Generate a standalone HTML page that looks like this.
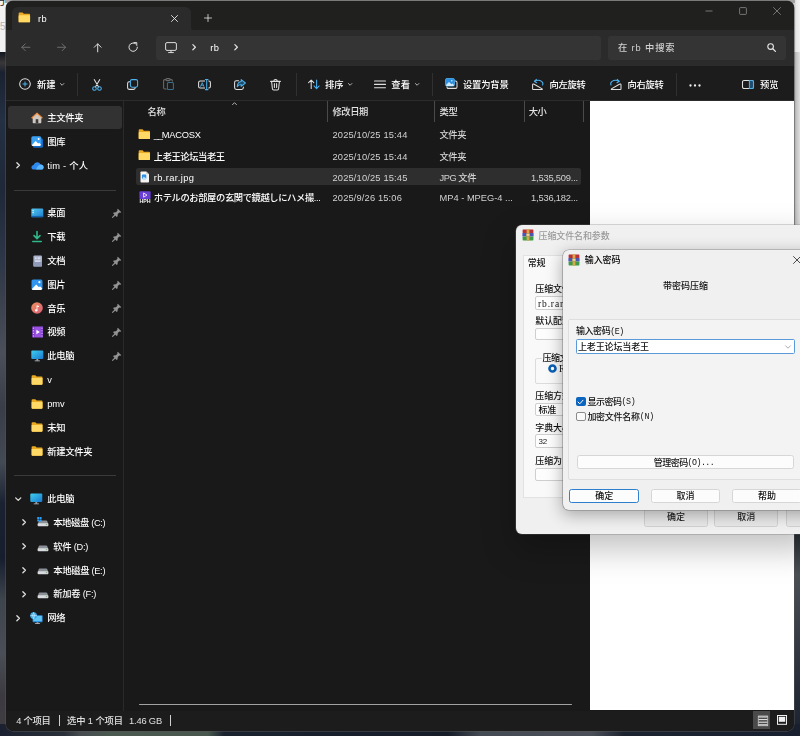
<!DOCTYPE html>
<html lang="zh-CN">
<head>
<meta charset="utf-8">
<title>rb</title>
<style>
*{box-sizing:border-box;margin:0;padding:0}
html,body{width:800px;height:736px;overflow:hidden}
body{position:relative;background:#2d333b;font-family:"Liberation Sans","Noto Sans CJK SC",sans-serif;font-size:9px;color:#fff;line-height:1}
.abs{position:absolute}
.t{position:absolute;white-space:nowrap;line-height:12px;height:12px;font-size:9px}
#wi,#dl{will-change:transform}
svg{position:absolute;overflow:visible}
#win{left:6px;top:1.2px;width:788px;height:729.5px;background:#191919;border-radius:7px;overflow:hidden;box-shadow:0 0 0 0.5px #555}
#wi{left:-6px;top:-1.2px;width:800px;height:736px;font-weight:500}
#wi .t{font-size:9.3px;margin-top:0.6px}
#dl{font-weight:500}
</style>
</head>
<body>

<div class="abs" style="left:0.00px;top:0.00px;width:800.00px;height:52.00px;background:#f2f2f2;"></div>
<div class="abs" style="left:0.00px;top:52.00px;width:10.00px;height:684.00px;background:linear-gradient(180deg,#10151f 0%,#3a3838 1.6%,#1a2230 3%,#243044 10%,#1e2838 20%,#2c3648 30%,#3a404c 36%,#4a4f5a 44%,#383d48 52%,#444a54 60%,#1a2232 66%,#161e2e 74%,#3e444c 80%,#4a4e56 88%,#3c3a40 94%,#403c42 100%);"></div>
<div class="abs" style="left:790.00px;top:0.00px;width:10.00px;height:534.00px;background:linear-gradient(90deg,#a0a0a0 0%,#a0a0a0 40%,#c4c4c4 65%,#e0e0e0 100%);"></div>
<div class="abs" style="left:790.00px;top:0.00px;width:10.00px;height:52.00px;background:linear-gradient(90deg,#c8c8c8 0%,#c8c8c8 40%,#e8e8e8 65%,#f2f2f2 100%);"></div>
<div class="abs" style="left:790.00px;top:534.00px;width:10.00px;height:202.00px;background:linear-gradient(180deg,#2a3038 0%,#4a4f56 20%,#3a4048 45%,#2a313c 70%,#1a2230 100%);"></div>
<div class="abs" style="left:0.00px;top:724.00px;width:800.00px;height:12.00px;background:linear-gradient(90deg,#1a2030 0%,#2a3038 8%,#464b50 10%,#4a5a50 14%,#48584e 26%,#1a2230 28%,#161c28 56%,#444a52 60%,#4a4f58 74%,#1c2330 78%,#182030 100%);"></div>
<div class="abs" style="left:5.00px;top:0.00px;width:790.00px;height:3.00px;background:#a2a2a2;"></div>
<div class="t" style='left:-5.00px;top:-4.70px;color:#222;font-size:11.00px;'>方</div>
<div class="t" style='left:-5.50px;top:20.80px;color:#b4b4b4;font-size:10.00px;font-family:"Liberation Sans",sans-serif;'>25</div>
<div class="abs" id="win"><div class="abs" id="wi">
<div class="abs" style="left:0.00px;top:0.00px;width:800.00px;height:30.00px;background:#20211f;"></div>
<div class="abs" style="left:11.80px;top:7.40px;width:179.20px;height:24.00px;background:#2b2b2b;border-radius:6px 6px 0 0;"></div>
<svg style="left:191.00px;top:27.00px;" width="3.00" height="3.00" viewBox="0 0 3 3"><path d="M0 3 V0 Q0 3 3 3 Z" fill="#2b2b2b"/></svg>
<div class="abs" style="left:0.00px;top:30.00px;width:800.00px;height:35.50px;background:#2b2b2b;"></div>
<div class="abs" style="left:0.00px;top:65.50px;width:800.00px;height:35.00px;background:#1c1c1c;"></div>
<div class="abs" style="left:0.00px;top:100.00px;width:800.00px;height:0.80px;background:#2c2c2c;"></div>
<svg style="left:18.00px;top:11.80px;" width="12.60" height="10.80" viewBox="0 0 12 10"><path d="M0.6 1.2 Q0.6 0.3 1.5 0.3 H4.3 L5.6 1.6 H10.6 Q11.5 1.6 11.5 2.5 V8.8 Q11.5 9.7 10.6 9.7 H1.5 Q0.6 9.7 0.6 8.8 Z" fill="#e9a923"/><path d="M0.6 3.6 Q0.6 2.9 1.4 2.9 H10.7 Q11.5 2.9 11.5 3.6 V8.8 Q11.5 9.7 10.6 9.7 H1.5 Q0.6 9.7 0.6 8.8 Z" fill="#ffd965"/></svg>
<div class="t" style='letter-spacing:0.359px;left:38.00px;top:12.80px;'>rb</div>
<svg style="left:171.00px;top:14.50px;" width="7.00" height="7.00" viewBox="0 0 7 7"><path d="M0.5 0.5 L6.5 6.5 M6.5 0.5 L0.5 6.5" stroke="#e8e8e8" stroke-width="0.9" stroke-linecap="round"/></svg>
<svg style="left:203.50px;top:14.00px;" width="8.00" height="8.00" viewBox="0 0 8 8"><path d="M4 0.5 V7.5 M0.5 4 H7.5" stroke="#e8e8e8" stroke-width="0.8" stroke-linecap="round"/></svg>
<svg style="left:704.80px;top:10.00px;" width="8.00" height="2.00" viewBox="0 0 8 2"><path d="M0.5 1 H7.5" stroke="#8c8c8c" stroke-width="0.8"/></svg>
<svg style="left:738.50px;top:7.00px;" width="8.00" height="8.00" viewBox="0 0 8 8"><rect x="0.6" y="0.6" width="6.8" height="6.8" rx="0.8" fill="none" stroke="#8c8c8c" stroke-width="0.8"/></svg>
<svg style="left:772.80px;top:7.00px;" width="8.00" height="8.00" viewBox="0 0 8 8"><path d="M0.5 0.5 L7.5 7.5 M7.5 0.5 L0.5 7.5" stroke="#8c8c8c" stroke-width="0.8" stroke-linecap="round"/></svg>
<svg style="left:21.30px;top:42.80px;" width="9.40" height="9.40" viewBox="0 0 11 11"><path d="M10.4 5 H1 M5 1 L1 5 L5 9" fill="none" stroke="#6e6e6e" stroke-width="1.15" stroke-linecap="round" stroke-linejoin="round"/></svg>
<svg style="left:57.30px;top:42.80px;" width="9.40" height="9.40" viewBox="0 0 11 11"><path d="M0.6 5 H10 M6 1 L10 5 L6 9" fill="none" stroke="#6e6e6e" stroke-width="1.15" stroke-linecap="round" stroke-linejoin="round"/></svg>
<svg style="left:92.60px;top:42.80px;" width="9.40" height="9.40" viewBox="0 0 11 11"><path d="M5.5 10.4 V1 M1.5 5 L5.5 1 L9.5 5" fill="none" stroke="#e0e0e0" stroke-width="1.15" stroke-linecap="round" stroke-linejoin="round"/></svg>
<svg style="left:128.00px;top:42.30px;" width="10.40" height="10.40" viewBox="0 0 10.4 10.4"><path d="M9.4 5.2 A4.2 4.2 0 1 1 7.6 1.7" fill="none" stroke="#e0e0e0" stroke-width="1" stroke-linecap="round"/><path d="M6 0.6 H8.8 V3.4" fill="none" stroke="#e0e0e0" stroke-width="1" stroke-linecap="round" stroke-linejoin="round"/></svg>
<div class="abs" style="left:156.00px;top:36.00px;width:445.00px;height:24.00px;background:#343434;border-radius:3px;"></div>
<svg style="left:165.30px;top:41.80px;" width="12.00" height="11.20" viewBox="0 0 12 11.2"><rect x="0.6" y="0.6" width="10.8" height="7.8" rx="1.4" fill="none" stroke="#dcdcdc" stroke-width="1"/><path d="M3.6 10.6 H8.4 M6 8.4 V10.6" stroke="#dcdcdc" stroke-width="1" stroke-linecap="round"/></svg>
<svg style="left:191.68px;top:44.37px;" width="4.25" height="6.46" viewBox="0 0 5 7.6"><path d="M1 0.8 L4 3.8 L1 6.8" fill="none" stroke="#e0e0e0" stroke-width="1.4" stroke-linecap="round" stroke-linejoin="round"/></svg>
<div class="t" style='letter-spacing:0.559px;left:210.20px;top:41.90px;'>rb</div>
<svg style="left:234.07px;top:44.37px;" width="4.25" height="6.46" viewBox="0 0 5 7.6"><path d="M1 0.8 L4 3.8 L1 6.8" fill="none" stroke="#e0e0e0" stroke-width="1.4" stroke-linecap="round" stroke-linejoin="round"/></svg>
<div class="abs" style="left:607.50px;top:36.00px;width:178.50px;height:24.00px;background:#343434;border-radius:3px;"></div>
<div class="t" style='letter-spacing:0.859px;left:618.00px;top:41.90px;color:#d0d0d0;'>在 rb 中搜索</div>
<svg style="left:767.20px;top:43.30px;" width="9.00" height="9.00" viewBox="0 0 9 9"><circle cx="3.6" cy="3.6" r="2.8" fill="none" stroke="#e6e6e6" stroke-width="1.1"/><path d="M5.8 5.8 L8.4 8.4" stroke="#e6e6e6" stroke-width="1.3" stroke-linecap="round"/></svg>
<svg style="left:19.00px;top:78.30px;" width="12.00" height="12.00" viewBox="0 0 12 12"><circle cx="6" cy="6" r="5.3" fill="none" stroke="#e4e4e4" stroke-width="1.05"/><path d="M6 3.9 V8.1 M3.9 6 H8.1" stroke="#4cb2f0" stroke-width="1" stroke-linecap="round"/></svg>
<div class="t" style='letter-spacing:-0.055px;left:37.00px;top:78.60px;'>新建</div>
<svg style="left:59.87px;top:83.20px;" width="4.26" height="2.80" viewBox="0 0 7.6 5"><path d="M0.8 1 L3.8 4 L6.8 1" fill="none" stroke="#c8c8c8" stroke-width="1.6" stroke-linecap="round" stroke-linejoin="round"/></svg>
<div class="abs" style="left:77.00px;top:72.50px;width:1.00px;height:23.50px;background:#303030;"></div>
<svg style="left:91.80px;top:78.50px;" width="10.00" height="11.60" viewBox="0 0 10 11.6"><path d="M2.2 0.6 L6.6 8 M7.8 0.6 L3.4 8" stroke="#e0e0e0" stroke-width="1.05" stroke-linecap="round"/><circle cx="2.5" cy="9.5" r="1.8" fill="none" stroke="#4cb2f0" stroke-width="1.05"/><circle cx="7.5" cy="9.5" r="1.8" fill="none" stroke="#4cb2f0" stroke-width="1.05"/></svg>
<svg style="left:127.00px;top:78.80px;" width="11.20" height="11.00" viewBox="0 0 11.2 11"><rect x="3.4" y="0.6" width="7.2" height="7.6" rx="1.6" fill="none" stroke="#4cb2f0" stroke-width="1.05"/><path d="M3 2.8 H2.2 Q0.6 2.8 0.6 4.4 V8.8 Q0.6 10.4 2.2 10.4 H6.6 Q8.2 10.4 8.2 8.8 V8.4" fill="none" stroke="#e0e0e0" stroke-width="1.05"/></svg>
<svg style="left:162.90px;top:78.30px;" width="11.00" height="12.00" viewBox="0 0 11 12"><path d="M3 1.6 H1.8 Q0.6 1.6 0.6 2.8 V9.8 Q0.6 11 1.8 11 H3.6" fill="none" stroke="#6a6a6a" stroke-width="1.05"/><path d="M7 1.6 H8.2 Q9.4 1.6 9.4 2.8 V3.6" fill="none" stroke="#6a6a6a" stroke-width="1.05"/><rect x="3" y="0.6" width="4" height="2" rx="0.8" fill="none" stroke="#6a6a6a" stroke-width="1.05"/><rect x="4.4" y="4.4" width="6" height="7" rx="1" fill="none" stroke="#3a6f8c" stroke-width="1.05"/></svg>
<svg style="left:197.50px;top:78.80px;" width="13.00" height="11.00" viewBox="0 0 13 11"><path d="M7 2 H2.2 Q0.6 2 0.6 3.6 V7.4 Q0.6 9 2.2 9 H7 M10.4 2 H10.8 Q12.4 2 12.4 3.6 V7.4 Q12.4 9 10.8 9 H10.4" fill="none" stroke="#e0e0e0" stroke-width="1.05"/><path d="M8.7 0.4 V10.6 M7.4 0.4 H10 M7.4 10.6 H10" stroke="#4cb2f0" stroke-width="1.05" stroke-linecap="round"/><path d="M2.6 7.4 L4.2 3.6 L5.8 7.4 M3.2 6.2 H5.2" fill="none" stroke="#4cb2f0" stroke-width="0.8" stroke-linecap="round" stroke-linejoin="round"/></svg>
<svg style="left:234.00px;top:78.80px;" width="12.00" height="11.00" viewBox="0 0 12 11"><path d="M4.6 1.8 H2.4 Q0.6 1.8 0.6 3.6 V8.6 Q0.6 10.4 2.4 10.4 H7.6 Q9.4 10.4 9.4 8.6 V8" fill="none" stroke="#e0e0e0" stroke-width="1.05" stroke-linecap="round"/><path d="M7.2 0.6 L11.4 4 L7.2 7.4 V5.4 Q4.4 5.4 3.2 7.8 Q3.4 3 7.2 2.6 Z" fill="#1f4a68" stroke="#4cb2f0" stroke-width="1.05" stroke-linejoin="round"/></svg>
<svg style="left:270.30px;top:78.50px;" width="11.00" height="11.60" viewBox="0 0 11 11.6"><path d="M0.6 2.4 H10.4 M3.8 2.2 Q3.8 0.6 5.5 0.6 Q7.2 0.6 7.2 2.2" fill="none" stroke="#e0e0e0" stroke-width="1.05" stroke-linecap="round"/><path d="M1.6 2.6 L2.4 9.8 Q2.5 11 3.7 11 H7.3 Q8.5 11 8.6 9.8 L9.4 2.6" fill="none" stroke="#e0e0e0" stroke-width="1.05"/><path d="M4.4 4.6 V8.6 M6.6 4.6 V8.6" stroke="#e0e0e0" stroke-width="1.05" stroke-linecap="round"/></svg>
<div class="abs" style="left:295.50px;top:72.50px;width:1.00px;height:23.50px;background:#303030;"></div>
<svg style="left:307.70px;top:79.00px;" width="11.80" height="10.60" viewBox="0 0 11.8 10.6"><path d="M3.2 9.6 V1 M0.6 3.6 L3.2 1 L5.8 3.6" fill="none" stroke="#e0e0e0" stroke-width="1.05" stroke-linecap="round" stroke-linejoin="round"/><path d="M8.6 1 V9.6 M6 7 L8.6 9.6 L11.2 7" fill="none" stroke="#4cb2f0" stroke-width="1.05" stroke-linecap="round" stroke-linejoin="round"/></svg>
<div class="t" style='letter-spacing:0.045px;left:325.00px;top:78.60px;'>排序</div>
<svg style="left:347.87px;top:83.20px;" width="4.26" height="2.80" viewBox="0 0 7.6 5"><path d="M0.8 1 L3.8 4 L6.8 1" fill="none" stroke="#c8c8c8" stroke-width="1.6" stroke-linecap="round" stroke-linejoin="round"/></svg>
<svg style="left:373.50px;top:80.10px;" width="12.00" height="8.80" viewBox="0 0 12 8.8"><path d="M0.5 1 H11.5 M0.5 4.4 H11.5 M0.5 7.8 H11.5" stroke="#e0e0e0" stroke-width="1.05" stroke-linecap="round"/></svg>
<div class="t" style='letter-spacing:0.045px;left:391.30px;top:78.60px;'>查看</div>
<svg style="left:414.57px;top:83.20px;" width="4.26" height="2.80" viewBox="0 0 7.6 5"><path d="M0.8 1 L3.8 4 L6.8 1" fill="none" stroke="#c8c8c8" stroke-width="1.6" stroke-linecap="round" stroke-linejoin="round"/></svg>
<div class="abs" style="left:431.50px;top:72.50px;width:1.00px;height:23.50px;background:#303030;"></div>
<svg style="left:444.60px;top:78.20px;" width="12.60" height="11.00" viewBox="0 0 12.6 11"><path d="M9.8 3 H10.6 Q12 3 12 4.4 V9 Q12 10.4 10.6 10.4 H3.4 Q2 10.4 2 9 V8.4" fill="none" stroke="#e0e0e0" stroke-width="1.05"/><rect x="0.5" y="0.5" width="9" height="7.6" rx="1.4" fill="#2d8fe0" stroke="#4cb2f0" stroke-width="0.8"/><path d="M0.9 7 L4 4 L6.4 6.2 L7.4 5.4 L9.1 7 Q9 8.1 8 8.1 H2 Q1 8.1 0.9 7 Z" fill="#cfeaff"/><circle cx="6.8" cy="2.8" r="0.8" fill="#cfeaff"/></svg>
<div class="t" style='letter-spacing:-0.200px;left:463.00px;top:78.60px;'>设置为背景</div>
<svg style="left:532.20px;top:79.10px;" width="11.60" height="11.20" viewBox="0 0 11.6 11.2"><path d="M2.6 2.2 Q6.6 0.4 9.6 2.4 Q11.6 4 10.6 6" fill="none" stroke="#4cb2f0" stroke-width="1.05" stroke-linecap="round"/><path d="M4.4 0.4 L2.4 2.3 L4.6 3.8" fill="none" stroke="#4cb2f0" stroke-width="1.05" stroke-linecap="round" stroke-linejoin="round"/><path d="M1.2 10.6 H9.8 Q10.6 10.6 10.2 9.9 L2.2 5.2 Q0.6 4.4 0.6 6 V10 Q0.6 10.6 1.2 10.6 Z" fill="none" stroke="#e0e0e0" stroke-width="1.05" stroke-linejoin="round"/></svg>
<div class="t" style='letter-spacing:-0.301px;left:549.60px;top:78.60px;'>向左旋转</div>
<svg style="left:609.70px;top:79.10px;" width="11.60" height="11.20" viewBox="0 0 11.6 11.2"><path d="M9 2.2 Q5 0.4 2 2.4 Q0 4 1 6" fill="none" stroke="#4cb2f0" stroke-width="1.05" stroke-linecap="round"/><path d="M7.2 0.4 L9.2 2.3 L7 3.8" fill="none" stroke="#4cb2f0" stroke-width="1.05" stroke-linecap="round" stroke-linejoin="round"/><path d="M10.4 10.6 H1.8 Q1 10.6 1.4 9.9 L9.4 5.2 Q11 4.4 11 6 V10 Q11 10.6 10.4 10.6 Z" fill="none" stroke="#e0e0e0" stroke-width="1.05" stroke-linejoin="round"/></svg>
<div class="t" style='letter-spacing:-0.301px;left:627.50px;top:78.60px;'>向右旋转</div>
<div class="abs" style="left:676.00px;top:72.50px;width:1.00px;height:23.50px;background:#303030;"></div>
<svg style="left:689.00px;top:83.50px;" width="12.00" height="3.00" viewBox="0 0 12 3"><circle cx="1.5" cy="1.5" r="1.15" fill="#f0f0f0"/><circle cx="6" cy="1.5" r="1.15" fill="#f0f0f0"/><circle cx="10.5" cy="1.5" r="1.15" fill="#f0f0f0"/></svg>
<svg style="left:742.00px;top:80.00px;" width="12.00" height="9.00" viewBox="0 0 12 9"><rect x="0.5" y="0.5" width="11" height="8" rx="1.6" fill="none" stroke="#e0e0e0" stroke-width="1.05"/><path d="M7.4 0.5 H9.9 Q11.5 0.5 11.5 2.1 V6.9 Q11.5 8.5 9.9 8.5 H7.4 Z" fill="#1f4e70" stroke="#4cb2f0" stroke-width="1.05"/></svg>
<div class="t" style='letter-spacing:-0.155px;left:760.00px;top:78.60px;'>预览</div>
<div class="abs" style="left:123.00px;top:100.50px;width:1.00px;height:610.00px;background:#2a2a2a;"></div>
<div class="abs" style="left:8.00px;top:105.80px;width:114.00px;height:23.60px;background:#323232;border-radius:3px;"></div>
<svg style="left:31.20px;top:111.80px;" width="12.00" height="12.00" viewBox="0 0 12 12"><path d="M6 0.8 L11.4 5.6 V6.4 H0.6 V5.6 Z" fill="#f08a3c"/><path d="M1.7 5.2 L6 1.6 L10.3 5.2 V10.6 Q10.3 11.2 9.7 11.2 H2.3 Q1.7 11.2 1.7 10.6 Z" fill="#cfc8c0"/><path d="M6 0.5 L11.6 5.4 L10.8 6.3 L6 2.1 L1.2 6.3 L0.4 5.4 Z" fill="#ef8a3e"/><rect x="4.7" y="7.2" width="2.6" height="4" fill="#3a3a3a"/></svg><div class="t" style='letter-spacing:-0.301px;left:47.20px;top:111.60px;'>主文件夹</div>
<svg style="left:31.20px;top:135.60px;" width="12.00" height="12.00" viewBox="0 0 12 12"><rect x="2" y="2.2" width="10" height="9.6" rx="1.6" fill="#1568c4"/><rect x="0.3" y="0.3" width="10" height="9.6" rx="1.6" fill="#3ba0f2"/><path d="M0.8 9.2 L4.6 5 L7.2 7.6 L8.2 6.7 L9.9 8.6 Q9.9 9.9 8.7 9.9 H1.9 Q0.9 9.9 0.8 9.2 Z" fill="#fff"/><circle cx="7.6" cy="3" r="1" fill="#fff"/></svg><div class="t" style='letter-spacing:-0.305px;left:47.20px;top:135.40px;'>图库</div>
<svg style="left:30.70px;top:160.65px;" width="13.00" height="9.50" viewBox="0 0 13 9.5"><path d="M3.2 8.6 Q0.4 8.6 0.4 6.2 Q0.4 4.2 2.6 3.9 Q3.4 1.2 6.2 1.2 Q8.6 1.2 9.5 3.4 Q12.6 3.6 12.6 6.2 Q12.6 8.6 10 8.6 Z" fill="#2f8af0"/><path d="M5 8.6 Q6 4.6 9.5 3.4 Q12.6 3.6 12.6 6.2 Q12.6 8.6 10 8.6 Z" fill="#5db6fb"/></svg><div class="t" style='letter-spacing:0.219px;left:47.20px;top:159.20px;'>tim - 个人</div><svg style="left:15.88px;top:162.47px;" width="4.25" height="6.46" viewBox="0 0 5 7.6"><path d="M1 0.8 L4 3.8 L1 6.8" fill="none" stroke="#e0e0e0" stroke-width="1.5" stroke-linecap="round" stroke-linejoin="round"/></svg>
<div class="abs" style="left:13.80px;top:189.50px;width:102.00px;height:0.90px;background:#3a3a3a;"></div>
<svg style="left:30.90px;top:208.10px;" width="12.60" height="9.80" viewBox="0 0 12.6 9.8"><defs><linearGradient id="gdk" x1="0" y1="0" x2="1" y2="1"><stop offset="0" stop-color="#55c7ee"/><stop offset="1" stop-color="#1c7fd0"/></linearGradient></defs><rect x="0.3" y="0.6" width="12" height="8.6" rx="1.2" fill="url(#gdk)"/><rect x="1.5" y="2" width="1.2" height="1.2" fill="#e8f8ff"/><rect x="1.5" y="4" width="1.2" height="1.2" fill="#e8f8ff"/><rect x="0.3" y="7.9" width="12" height="1.3" fill="#1563ad"/></svg><div class="t" style='letter-spacing:-0.305px;left:47.20px;top:206.80px;'>桌面</div><svg style="left:111.60px;top:208.20px;" width="10.00" height="10.00" viewBox="0 0 9 9"><path d="M5.2 0.6 L8.4 3.8 L7.4 4.3 L6.6 4.1 L5.2 5.5 L5 7.4 L4.2 8 L1 4.8 L1.6 4 L3.5 3.8 L4.9 2.4 L4.7 1.6 Z" fill="#939393"/><path d="M2.7 6.3 L0.5 8.5" stroke="#939393" stroke-width="1" stroke-linecap="round"/></svg>
<svg style="left:32.20px;top:231.12px;" width="10.00" height="11.40" viewBox="0 0 10 11.4"><path d="M5 0.5 V7.2 M2 4.6 L5 7.6 L8 4.6" fill="none" stroke="#2fb888" stroke-width="1.6" stroke-linecap="round" stroke-linejoin="round"/><path d="M0.8 10.5 H9.2" stroke="#2fb888" stroke-width="1.6" stroke-linecap="round"/></svg><div class="t" style='letter-spacing:-0.305px;left:47.20px;top:230.62px;'>下载</div><svg style="left:111.60px;top:232.02px;" width="10.00" height="10.00" viewBox="0 0 9 9"><path d="M5.2 0.6 L8.4 3.8 L7.4 4.3 L6.6 4.1 L5.2 5.5 L5 7.4 L4.2 8 L1 4.8 L1.6 4 L3.5 3.8 L4.9 2.4 L4.7 1.6 Z" fill="#939393"/><path d="M2.7 6.3 L0.5 8.5" stroke="#939393" stroke-width="1" stroke-linecap="round"/></svg>
<svg style="left:32.50px;top:254.64px;" width="9.40" height="12.00" viewBox="0 0 9.4 12"><rect x="0.4" y="0.4" width="8.6" height="11.2" rx="1.2" fill="#a9b4cc"/><rect x="0.4" y="6.5" width="8.6" height="5.1" rx="1.2" fill="#8f9bb8"/><rect x="2" y="2.6" width="1.6" height="1" fill="#f4f6fa"/><rect x="4.6" y="2.6" width="2.8" height="1" fill="#f4f6fa"/><rect x="2" y="5.6" width="5.4" height="1" fill="#f4f6fa"/></svg><div class="t" style='letter-spacing:-0.305px;left:47.20px;top:254.44px;'>文档</div><svg style="left:111.60px;top:255.84px;" width="10.00" height="10.00" viewBox="0 0 9 9"><path d="M5.2 0.6 L8.4 3.8 L7.4 4.3 L6.6 4.1 L5.2 5.5 L5 7.4 L4.2 8 L1 4.8 L1.6 4 L3.5 3.8 L4.9 2.4 L4.7 1.6 Z" fill="#939393"/><path d="M2.7 6.3 L0.5 8.5" stroke="#939393" stroke-width="1" stroke-linecap="round"/></svg>
<svg style="left:31.20px;top:278.76px;" width="12.00" height="11.40" viewBox="0 0 12 11.4"><rect x="0.5" y="0.5" width="11" height="10.4" rx="1.6" fill="#2f95ee"/><path d="M0.9 10 L5.2 5.4 L8 8.2 L9 7.3 L11.2 9.6 Q11 10.9 9.9 10.9 H2.1 Q1 10.9 0.9 10 Z" fill="#fff"/><circle cx="8.4" cy="3.2" r="1.1" fill="#fff"/></svg><div class="t" style='letter-spacing:-0.305px;left:47.20px;top:278.26px;'>图片</div><svg style="left:111.60px;top:279.66px;" width="10.00" height="10.00" viewBox="0 0 9 9"><path d="M5.2 0.6 L8.4 3.8 L7.4 4.3 L6.6 4.1 L5.2 5.5 L5 7.4 L4.2 8 L1 4.8 L1.6 4 L3.5 3.8 L4.9 2.4 L4.7 1.6 Z" fill="#939393"/><path d="M2.7 6.3 L0.5 8.5" stroke="#939393" stroke-width="1" stroke-linecap="round"/></svg>
<svg style="left:31.20px;top:302.28px;" width="12.00" height="12.00" viewBox="0 0 12 12"><defs><linearGradient id="gmu" x1="0" y1="0" x2="1" y2="1"><stop offset="0" stop-color="#f0925a"/><stop offset="1" stop-color="#d85c7c"/></linearGradient></defs><circle cx="6" cy="6" r="5.8" fill="url(#gmu)"/><path d="M5.6 8.4 V3.2 L8 3.9 V5.1 L6.4 4.7 V8.4" fill="#fff"/><ellipse cx="5.2" cy="8.4" rx="1.3" ry="1.1" fill="#fff"/></svg><div class="t" style='letter-spacing:-0.305px;left:47.20px;top:302.08px;'>音乐</div><svg style="left:111.60px;top:303.48px;" width="10.00" height="10.00" viewBox="0 0 9 9"><path d="M5.2 0.6 L8.4 3.8 L7.4 4.3 L6.6 4.1 L5.2 5.5 L5 7.4 L4.2 8 L1 4.8 L1.6 4 L3.5 3.8 L4.9 2.4 L4.7 1.6 Z" fill="#939393"/><path d="M2.7 6.3 L0.5 8.5" stroke="#939393" stroke-width="1" stroke-linecap="round"/></svg>
<svg style="left:31.50px;top:326.10px;" width="11.40" height="12.00" viewBox="0 0 11.4 12"><rect x="0.4" y="0.4" width="10.6" height="11.2" rx="1.4" fill="#9a52e0"/><rect x="0.4" y="0.4" width="2" height="11.2" fill="#7a36c4"/><rect x="9" y="0.4" width="2" height="11.2" fill="#7a36c4"/><rect x="0.9" y="1.6" width="1" height="1.2" fill="#e6d4fa"/><rect x="0.9" y="4.2" width="1" height="1.2" fill="#e6d4fa"/><rect x="0.9" y="6.8" width="1" height="1.2" fill="#e6d4fa"/><rect x="0.9" y="9.4" width="1" height="1.2" fill="#e6d4fa"/><rect x="9.5" y="1.6" width="1" height="1.2" fill="#e6d4fa"/><rect x="9.5" y="4.2" width="1" height="1.2" fill="#e6d4fa"/><rect x="9.5" y="6.8" width="1" height="1.2" fill="#e6d4fa"/><rect x="9.5" y="9.4" width="1" height="1.2" fill="#e6d4fa"/><path d="M4.4 3.8 L7.8 6 L4.4 8.2 Z" fill="#fff"/></svg><div class="t" style='letter-spacing:-0.305px;left:47.20px;top:325.90px;'>视频</div><svg style="left:111.60px;top:327.30px;" width="10.00" height="10.00" viewBox="0 0 9 9"><path d="M5.2 0.6 L8.4 3.8 L7.4 4.3 L6.6 4.1 L5.2 5.5 L5 7.4 L4.2 8 L1 4.8 L1.6 4 L3.5 3.8 L4.9 2.4 L4.7 1.6 Z" fill="#939393"/><path d="M2.7 6.3 L0.5 8.5" stroke="#939393" stroke-width="1" stroke-linecap="round"/></svg>
<svg style="left:30.90px;top:350.12px;" width="12.60" height="11.60" viewBox="0 0 12.6 11.6"><defs><linearGradient id="gpc" x1="0" y1="0" x2="1" y2="1"><stop offset="0" stop-color="#3fd0f0"/><stop offset="1" stop-color="#1a78d0"/></linearGradient></defs><rect x="0.3" y="0.4" width="12" height="8.6" rx="1.1" fill="url(#gpc)"/><rect x="5.4" y="9" width="1.8" height="1.6" fill="#9aa4ae"/><rect x="3.6" y="10.4" width="5.4" height="0.9" rx="0.4" fill="#c4ccd4"/></svg><div class="t" style='letter-spacing:-0.302px;left:47.20px;top:349.72px;'>此电脑</div><svg style="left:111.60px;top:351.12px;" width="10.00" height="10.00" viewBox="0 0 9 9"><path d="M5.2 0.6 L8.4 3.8 L7.4 4.3 L6.6 4.1 L5.2 5.5 L5 7.4 L4.2 8 L1 4.8 L1.6 4 L3.5 3.8 L4.9 2.4 L4.7 1.6 Z" fill="#939393"/><path d="M2.7 6.3 L0.5 8.5" stroke="#939393" stroke-width="1" stroke-linecap="round"/></svg>
<svg style="left:31.20px;top:374.74px;" width="12.00" height="10.00" viewBox="0 0 12 10"><path d="M0.6 1.2 Q0.6 0.3 1.5 0.3 H4.3 L5.6 1.6 H10.6 Q11.5 1.6 11.5 2.5 V8.8 Q11.5 9.7 10.6 9.7 H1.5 Q0.6 9.7 0.6 8.8 Z" fill="#e9a923"/><path d="M0.6 3.6 Q0.6 2.9 1.4 2.9 H10.7 Q11.5 2.9 11.5 3.6 V8.8 Q11.5 9.7 10.6 9.7 H1.5 Q0.6 9.7 0.6 8.8 Z" fill="#ffd965"/></svg><div class="t" style='letter-spacing:-0.156px;left:47.20px;top:373.54px;'>v</div>
<svg style="left:31.20px;top:398.56px;" width="12.00" height="10.00" viewBox="0 0 12 10"><path d="M0.6 1.2 Q0.6 0.3 1.5 0.3 H4.3 L5.6 1.6 H10.6 Q11.5 1.6 11.5 2.5 V8.8 Q11.5 9.7 10.6 9.7 H1.5 Q0.6 9.7 0.6 8.8 Z" fill="#e9a923"/><path d="M0.6 3.6 Q0.6 2.9 1.4 2.9 H10.7 Q11.5 2.9 11.5 3.6 V8.8 Q11.5 9.7 10.6 9.7 H1.5 Q0.6 9.7 0.6 8.8 Z" fill="#ffd965"/></svg><div class="t" style='letter-spacing:-0.026px;left:47.20px;top:397.36px;'>pmv</div>
<svg style="left:31.20px;top:422.38px;" width="12.00" height="10.00" viewBox="0 0 12 10"><path d="M0.6 1.2 Q0.6 0.3 1.5 0.3 H4.3 L5.6 1.6 H10.6 Q11.5 1.6 11.5 2.5 V8.8 Q11.5 9.7 10.6 9.7 H1.5 Q0.6 9.7 0.6 8.8 Z" fill="#e9a923"/><path d="M0.6 3.6 Q0.6 2.9 1.4 2.9 H10.7 Q11.5 2.9 11.5 3.6 V8.8 Q11.5 9.7 10.6 9.7 H1.5 Q0.6 9.7 0.6 8.8 Z" fill="#ffd965"/></svg><div class="t" style='letter-spacing:-0.305px;left:47.20px;top:421.18px;'>未知</div>
<svg style="left:31.20px;top:446.20px;" width="12.00" height="10.00" viewBox="0 0 12 10"><path d="M0.6 1.2 Q0.6 0.3 1.5 0.3 H4.3 L5.6 1.6 H10.6 Q11.5 1.6 11.5 2.5 V8.8 Q11.5 9.7 10.6 9.7 H1.5 Q0.6 9.7 0.6 8.8 Z" fill="#e9a923"/><path d="M0.6 3.6 Q0.6 2.9 1.4 2.9 H10.7 Q11.5 2.9 11.5 3.6 V8.8 Q11.5 9.7 10.6 9.7 H1.5 Q0.6 9.7 0.6 8.8 Z" fill="#ffd965"/></svg><div class="t" style='letter-spacing:-0.300px;left:47.20px;top:445.00px;'>新建文件夹</div>
<div class="abs" style="left:13.80px;top:475.00px;width:102.00px;height:0.90px;background:#3a3a3a;"></div>
<svg style="left:30.30px;top:492.70px;" width="12.60" height="11.60" viewBox="0 0 12.6 11.6"><defs><linearGradient id="gpc" x1="0" y1="0" x2="1" y2="1"><stop offset="0" stop-color="#3fd0f0"/><stop offset="1" stop-color="#1a78d0"/></linearGradient></defs><rect x="0.3" y="0.4" width="12" height="8.6" rx="1.1" fill="url(#gpc)"/><rect x="5.4" y="9" width="1.8" height="1.6" fill="#9aa4ae"/><rect x="3.6" y="10.4" width="5.4" height="0.9" rx="0.4" fill="#c4ccd4"/></svg><div class="t" style='letter-spacing:-0.302px;left:47.20px;top:492.30px;'>此电脑</div><svg style="left:14.77px;top:496.68px;" width="6.46" height="4.25" viewBox="0 0 7.6 5"><path d="M0.8 1 L3.8 4 L6.8 1" fill="none" stroke="#e0e0e0" stroke-width="1.5" stroke-linecap="round" stroke-linejoin="round"/></svg>
<svg style="left:36.60px;top:516.80px;" width="12.00" height="9.60" viewBox="0 0 12 9.6"><path d="M1.6 4.6 Q1.8 3.6 2.8 3.6 H9.2 Q10.2 3.6 10.4 4.6 L11.2 7 H0.8 Z" fill="#8b9096"/><rect x="0.6" y="6.2" width="10.8" height="3" rx="0.9" fill="#d8dadd"/><rect x="8.8" y="7.3" width="1.4" height="0.8" fill="#6a9a6a"/><rect x="0.2" y="0" width="2" height="2" fill="#2a9df4"/><rect x="2.6" y="0" width="2" height="2" fill="#2a9df4"/><rect x="0.2" y="2.4" width="2" height="2" fill="#2a9df4"/><rect x="2.6" y="2.4" width="2" height="2" fill="#2a9df4"/></svg><div class="t" style='letter-spacing:-0.363px;left:53.20px;top:516.20px;'>本地磁盘 (C:)</div><svg style="left:21.88px;top:519.47px;" width="4.25" height="6.46" viewBox="0 0 5 7.6"><path d="M1 0.8 L4 3.8 L1 6.8" fill="none" stroke="#e0e0e0" stroke-width="1.5" stroke-linecap="round" stroke-linejoin="round"/></svg>
<svg style="left:36.60px;top:541.50px;" width="12.00" height="9.60" viewBox="0 0 12 9.6"><path d="M1.6 4.6 Q1.8 3.6 2.8 3.6 H9.2 Q10.2 3.6 10.4 4.6 L11.2 7 H0.8 Z" fill="#8b9096"/><rect x="0.6" y="6.2" width="10.8" height="3" rx="0.9" fill="#d8dadd"/><rect x="8.8" y="7.3" width="1.4" height="0.8" fill="#6a9a6a"/></svg><div class="t" style='letter-spacing:-0.239px;left:53.20px;top:540.10px;'>软件 (D:)</div><svg style="left:21.88px;top:543.37px;" width="4.25" height="6.46" viewBox="0 0 5 7.6"><path d="M1 0.8 L4 3.8 L1 6.8" fill="none" stroke="#e0e0e0" stroke-width="1.5" stroke-linecap="round" stroke-linejoin="round"/></svg>
<svg style="left:36.60px;top:565.40px;" width="12.00" height="9.60" viewBox="0 0 12 9.6"><path d="M1.6 4.6 Q1.8 3.6 2.8 3.6 H9.2 Q10.2 3.6 10.4 4.6 L11.2 7 H0.8 Z" fill="#8b9096"/><rect x="0.6" y="6.2" width="10.8" height="3" rx="0.9" fill="#d8dadd"/><rect x="8.8" y="7.3" width="1.4" height="0.8" fill="#6a9a6a"/></svg><div class="t" style='letter-spacing:-0.306px;left:53.20px;top:564.00px;'>本地磁盘 (E:)</div><svg style="left:21.88px;top:567.27px;" width="4.25" height="6.46" viewBox="0 0 5 7.6"><path d="M1 0.8 L4 3.8 L1 6.8" fill="none" stroke="#e0e0e0" stroke-width="1.5" stroke-linecap="round" stroke-linejoin="round"/></svg>
<svg style="left:36.60px;top:589.30px;" width="12.00" height="9.60" viewBox="0 0 12 9.6"><path d="M1.6 4.6 Q1.8 3.6 2.8 3.6 H9.2 Q10.2 3.6 10.4 4.6 L11.2 7 H0.8 Z" fill="#8b9096"/><rect x="0.6" y="6.2" width="10.8" height="3" rx="0.9" fill="#d8dadd"/><rect x="8.8" y="7.3" width="1.4" height="0.8" fill="#6a9a6a"/></svg><div class="t" style='letter-spacing:-0.242px;left:53.20px;top:587.90px;'>新加卷 (F:)</div><svg style="left:21.88px;top:591.17px;" width="4.25" height="6.46" viewBox="0 0 5 7.6"><path d="M1 0.8 L4 3.8 L1 6.8" fill="none" stroke="#e0e0e0" stroke-width="1.5" stroke-linecap="round" stroke-linejoin="round"/></svg>
<svg style="left:30.10px;top:611.90px;" width="13.00" height="12.20" viewBox="0 0 13 12.2"><rect x="2.6" y="3.2" width="10" height="7" rx="0.9" fill="#2e8fdc"/><rect x="3.4" y="4" width="8.4" height="5" fill="#5ec4f4"/><rect x="6.6" y="10.2" width="1.8" height="1.2" fill="#9aa4ae"/><rect x="4.8" y="11.2" width="5.4" height="0.8" rx="0.4" fill="#c4ccd4"/><circle cx="3.6" cy="3.6" r="3.4" fill="#3aa8ea"/><path d="M0.4 3.6 H6.8 M3.6 0.4 Q1.6 3.6 3.6 6.8 M3.6 0.4 Q5.6 3.6 3.6 6.8" fill="none" stroke="#d8f2ff" stroke-width="0.6"/></svg><div class="t" style='letter-spacing:-0.305px;left:47.20px;top:611.80px;'>网络</div><svg style="left:15.88px;top:615.07px;" width="4.25" height="6.46" viewBox="0 0 5 7.6"><path d="M1 0.8 L4 3.8 L1 6.8" fill="none" stroke="#e0e0e0" stroke-width="1.5" stroke-linecap="round" stroke-linejoin="round"/></svg>
<div class="t" style='letter-spacing:-0.305px;left:147.50px;top:105.90px;color:#e4e4e4;'>名称</div>
<svg style="left:232.49px;top:101.55px;" width="5.02" height="3.30" viewBox="0 0 7.6 5"><path d="M0.8 4 L3.8 1 L6.8 4" fill="none" stroke="#b4b4b4" stroke-width="1.5" stroke-linecap="round" stroke-linejoin="round"/></svg>
<div class="abs" style="left:327.30px;top:101.00px;width:0.90px;height:20.50px;background:#4a4a4a;"></div>
<div class="t" style='letter-spacing:-0.426px;left:332.50px;top:105.90px;color:#e4e4e4;'>修改日期</div>
<div class="abs" style="left:434.30px;top:101.00px;width:0.90px;height:20.50px;background:#4a4a4a;"></div>
<div class="t" style='letter-spacing:-0.305px;left:439.50px;top:105.90px;color:#e4e4e4;'>类型</div>
<div class="abs" style="left:524.00px;top:101.00px;width:0.90px;height:20.50px;background:#4a4a4a;"></div>
<div class="t" style='letter-spacing:-0.555px;left:528.80px;top:105.90px;color:#e4e4e4;'>大小</div>
<div class="abs" style="left:583.00px;top:101.00px;width:0.90px;height:20.50px;background:#4a4a4a;"></div>
<div class="abs" style="left:135.80px;top:168.20px;width:444.80px;height:17.00px;background:#2e2e2e;border-radius:2.5px;"></div>
<svg style="left:138.20px;top:129.00px;" width="12.60" height="10.40" viewBox="0 0 12 10"><path d="M0.6 1.2 Q0.6 0.3 1.5 0.3 H4.3 L5.6 1.6 H10.6 Q11.5 1.6 11.5 2.5 V8.8 Q11.5 9.7 10.6 9.7 H1.5 Q0.6 9.7 0.6 8.8 Z" fill="#e9a923"/><path d="M0.6 3.6 Q0.6 2.9 1.4 2.9 H10.7 Q11.5 2.9 11.5 3.6 V8.8 Q11.5 9.7 10.6 9.7 H1.5 Q0.6 9.7 0.6 8.8 Z" fill="#ffd965"/></svg>
<div class="t" style='letter-spacing:-0.194px;left:153.80px;top:128.80px;'><span style='letter-spacing:-1.2px'>__</span>MACOSX</div>
<div class="t" style='letter-spacing:0.163px;left:332.50px;top:128.80px;color:#d2d2d2;'>2025/10/25 15:44</div>
<div class="t" style='letter-spacing:-0.469px;left:439.50px;top:128.80px;color:#d2d2d2;'>文件夹</div>
<svg style="left:138.20px;top:150.20px;" width="12.60" height="10.40" viewBox="0 0 12 10"><path d="M0.6 1.2 Q0.6 0.3 1.5 0.3 H4.3 L5.6 1.6 H10.6 Q11.5 1.6 11.5 2.5 V8.8 Q11.5 9.7 10.6 9.7 H1.5 Q0.6 9.7 0.6 8.8 Z" fill="#e9a923"/><path d="M0.6 3.6 Q0.6 2.9 1.4 2.9 H10.7 Q11.5 2.9 11.5 3.6 V8.8 Q11.5 9.7 10.6 9.7 H1.5 Q0.6 9.7 0.6 8.8 Z" fill="#ffd965"/></svg>
<div class="t" style='letter-spacing:-0.449px;left:153.80px;top:150.00px;'>上老王论坛当老王</div>
<div class="t" style='letter-spacing:0.163px;left:332.50px;top:150.00px;color:#d2d2d2;'>2025/10/25 15:44</div>
<div class="t" style='letter-spacing:-0.469px;left:439.50px;top:150.00px;color:#d2d2d2;'>文件夹</div>
<svg style="left:139.75px;top:170.50px;" width="9.50" height="12.00" viewBox="0 0 9.5 12"><path d="M0.5 1.2 Q0.5 0.4 1.3 0.4 H6.2 L9 3.2 V10.8 Q9 11.6 8.2 11.6 H1.3 Q0.5 11.6 0.5 10.8 Z" fill="#f4f4f4"/><path d="M6.2 0.4 L9 3.2 H6.8 Q6.2 3.2 6.2 2.6 Z" fill="#c8c8c8"/><rect x="1.9" y="3.6" width="4.4" height="4.6" rx="0.9" fill="#2f8fe6"/><path d="M2.3 7.4 L3.9 5.6 L5 6.8 L5.5 6.4 L6 7.2 Q6 8.2 5.4 8.2 H2.8 Q2.3 8.2 2.3 7.4 Z" fill="#bfe2ff"/></svg>
<div class="t" style='letter-spacing:0.380px;left:153.80px;top:171.10px;'>rb.rar.jpg</div>
<div class="t" style='letter-spacing:0.163px;left:332.50px;top:171.10px;color:#d2d2d2;'>2025/10/25 15:45</div>
<div class="t" style='letter-spacing:-0.461px;left:439.50px;top:171.10px;color:#d2d2d2;'>JPG 文件</div>
<div class="t" style='letter-spacing:-0.176px;left:531.00px;top:171.10px;color:#d2d2d2;'>1,535,509...</div>
<svg style="left:138.60px;top:191.10px;" width="12.00" height="12.40" viewBox="0 0 12 12.4"><rect x="0.4" y="0.3" width="11.2" height="7.6" rx="1" fill="#6a3fd8"/><path d="M4.6 2 L8 4.1 L4.6 6.2 Z" fill="none" stroke="#fff" stroke-width="0.8" stroke-linejoin="round"/><text x="6" y="12.3" font-family="Liberation Sans, sans-serif" font-size="5.3" font-weight="bold" fill="#f4f4f4" text-anchor="middle" textLength="11.2" lengthAdjust="spacingAndGlyphs">HPH</text></svg>
<div class="t" style='letter-spacing:-0.409px;left:153.80px;top:191.50px;font-family:"Liberation Sans","Noto Sans CJK JP",sans-serif;'>ホテルのお部屋の玄関で鏡越しにハメ撮...</div>
<div class="t" style='letter-spacing:0.152px;left:332.50px;top:191.50px;color:#d2d2d2;'>2025/9/26 15:06</div>
<div class="t" style='left:439.50px;top:191.50px;color:#d2d2d2;'>MP4 - MPEG-4 ...</div>
<div class="t" style='letter-spacing:-0.176px;left:531.00px;top:191.50px;color:#d2d2d2;'>1,536,182...</div>
<div class="abs" style="left:138.50px;top:703.90px;width:433.00px;height:1.60px;background:#a2a2a2;border-radius:1px;"></div>
<div class="abs" style="left:589.60px;top:100.80px;width:205.00px;height:609.70px;background:#ffffff;"></div>
<div class="abs" style="left:0.00px;top:710.50px;width:800.00px;height:21.00px;background:#1c1c1c;"></div>
<div class="t" style='letter-spacing:-0.271px;left:16.30px;top:714.60px;color:#e0e0e0;'>4 个项目</div>
<div class="abs" style="left:59.00px;top:715.00px;width:0.90px;height:11.00px;background:#d0d0d0;"></div>
<div class="t" style='letter-spacing:-0.104px;left:67.00px;top:714.60px;color:#e0e0e0;'>选中 1 个项目</div>
<div class="t" style='letter-spacing:-0.161px;left:129.00px;top:714.60px;color:#e0e0e0;'>1.46 GB</div>
<div class="abs" style="left:170.00px;top:715.00px;width:0.90px;height:11.00px;background:#d0d0d0;"></div>
<div class="abs" style="left:752.60px;top:711.40px;width:17.00px;height:18.00px;background:#4a4a4a;"></div>
<svg style="left:757.80px;top:715.70px;" width="10.00" height="9.80" viewBox="0 0 10 9.8"><path d="M0.6 1 H9.4 M0.6 3.6 H9.4 M0.6 6.2 H9.4 M0.6 8.8 H9.4" stroke="#f0f0f0" stroke-width="1"/><rect x="0.2" y="0" width="9.6" height="9.8" fill="none" stroke="#f0f0f0" stroke-width="0.6"/></svg>
<svg style="left:776.80px;top:715.40px;" width="10.00" height="9.80" viewBox="0 0 10 9.8"><rect x="0.5" y="0.5" width="9" height="8.8" fill="none" stroke="#f0f0f0" stroke-width="1"/><rect x="1.8" y="1.8" width="6.4" height="5" fill="#f0f0f0"/></svg>
</div></div>
<div class="abs" id="dl" style="left:0;top:0;width:800px;height:736px;overflow:hidden">
<div class="abs" style="left:516.40px;top:225.00px;width:300.00px;height:308.80px;background:#f0f0f0;border-radius:6px 0 0 6px;box-shadow:0 14px 34px 0 rgba(0,0,0,0.26),0 0 0 0.6px rgba(120,120,120,0.55);"></div>
<svg style="left:522.00px;top:229.30px;" width="12.00" height="11.80" viewBox="0 0 12 11.8"><rect x="0.6" y="0.4" width="10.8" height="3.6" rx="0.6" fill="#b8323a"/><rect x="0.4" y="4" width="11.2" height="3.6" rx="0.6" fill="#4a56b8"/><rect x="0.6" y="7.6" width="10.8" height="3.8" rx="0.6" fill="#3f9a48"/><rect x="4.6" y="0.2" width="2.8" height="11.4" fill="#d8a84a"/><rect x="4.2" y="4.6" width="3.6" height="2.6" rx="0.4" fill="#f0e0a0" stroke="#7a5a20" stroke-width="0.4"/></svg>
<div class="t" style='letter-spacing:-0.127px;left:538.60px;top:229.50px;color:#9a9a9a;'>压缩文件名和参数</div>
<div class="abs" style="left:522.60px;top:255.20px;width:300.00px;height:243.00px;background:#f9f9f9;border:0.8px solid #e2e2e2;"></div>
<div class="t" style='letter-spacing:-0.208px;left:527.80px;top:257.00px;color:#111;'>常规</div>
<div class="t" style='letter-spacing:-0.143px;left:535.30px;top:283.10px;color:#111;'>压缩文件名</div>
<div class="abs" style="left:535.30px;top:296.20px;width:100.00px;height:14.00px;background:#fff;border:0.8px solid #cfcfcf;border-radius:2px;"></div>
<div class="t" style='letter-spacing:0.859px;left:538.00px;top:297.60px;color:#111;font-size:9.50px;font-family:"Liberation Serif","Noto Sans CJK SC",serif;'>rb.rar</div>
<div class="t" style='letter-spacing:-0.154px;left:535.30px;top:314.90px;color:#111;'>默认配置</div>
<div class="abs" style="left:535.30px;top:328.00px;width:100.00px;height:12.40px;background:#fdfdfd;border:0.8px solid #cfcfcf;border-radius:2px;"></div>
<div class="abs" style="left:535.20px;top:357.50px;width:100.00px;height:26.00px;border:0.8px solid #dcdcdc;border-radius:2px;"></div>
<div class="t" style='letter-spacing:-0.486px;left:541.50px;top:351.50px;color:#111;background:#f9f9f9;padding:0 1px;'>压缩文件格式</div>
<svg style="left:548.30px;top:364.40px;" width="9.00" height="9.00" viewBox="0 0 9 9"><circle cx="4.5" cy="4.5" r="3" fill="#fff" stroke="#0a5fb4" stroke-width="2.6"/></svg>
<div class="t" style='letter-spacing:-1.182px;left:559.00px;top:363.30px;color:#111;font-size:9.50px;font-family:"Liberation Serif","Noto Sans CJK SC",serif;'>RAR</div>
<div class="t" style='letter-spacing:-0.154px;left:535.30px;top:389.80px;color:#111;'>压缩方式</div>
<div class="abs" style="left:535.30px;top:403.00px;width:100.00px;height:12.80px;background:#fdfdfd;border:0.8px solid #cfcfcf;border-radius:2px;"></div>
<div class="t" style='letter-spacing:-0.258px;left:538.60px;top:403.80px;color:#111;'>标准</div>
<div class="t" style='letter-spacing:-0.154px;left:535.30px;top:422.30px;color:#111;'>字典大小</div>
<div class="abs" style="left:535.30px;top:434.40px;width:100.00px;height:13.60px;background:#fdfdfd;border:0.8px solid #cfcfcf;border-radius:2px;"></div>
<div class="t" style='letter-spacing:-0.203px;left:538.60px;top:435.60px;color:#222;font-size:8.00px;'>32</div>
<div class="t" style='letter-spacing:-0.139px;left:535.30px;top:454.90px;color:#111;'>压缩为</div>
<div class="abs" style="left:535.30px;top:468.00px;width:100.00px;height:13.40px;background:#fdfdfd;border:0.8px solid #cfcfcf;border-radius:2px;"></div>
<div class="abs" style="left:644.40px;top:508.00px;width:63.40px;height:18.60px;background:#e9e9e9;border:0.8px solid #d2d2d2;border-radius:2.5px;"></div>
<div class="t" style='left:676.10px;top:511.30px;color:#222;transform:translateX(-50%);'>确定</div>
<div class="abs" style="left:714.40px;top:508.00px;width:63.80px;height:18.60px;background:#e9e9e9;border:0.8px solid #d2d2d2;border-radius:2.5px;"></div>
<div class="t" style='left:746.30px;top:511.30px;color:#222;transform:translateX(-50%);'>取消</div>
<div class="abs" style="left:785.60px;top:508.00px;width:40.00px;height:18.60px;background:#e9e9e9;border:0.8px solid #d2d2d2;border-radius:2.5px;"></div>
<div class="abs" style="left:562.80px;top:249.70px;width:260.00px;height:259.90px;background:#f0f0f0;border-radius:6px 0 0 6px;box-shadow:0 4px 16px 1px rgba(0,0,0,0.30),0 0 0 0.6px rgba(110,110,110,0.6);"></div>
<svg style="left:568.20px;top:253.90px;" width="12.00" height="11.80" viewBox="0 0 12 11.8"><rect x="0.6" y="0.4" width="10.8" height="3.6" rx="0.6" fill="#b8323a"/><rect x="0.4" y="4" width="11.2" height="3.6" rx="0.6" fill="#4a56b8"/><rect x="0.6" y="7.6" width="10.8" height="3.8" rx="0.6" fill="#3f9a48"/><rect x="4.6" y="0.2" width="2.8" height="11.4" fill="#d8a84a"/><rect x="4.2" y="4.6" width="3.6" height="2.6" rx="0.4" fill="#f0e0a0" stroke="#7a5a20" stroke-width="0.4"/></svg>
<div class="t" style='letter-spacing:-0.129px;left:584.80px;top:254.10px;color:#000;'>输入密码</div>
<svg style="left:792.50px;top:255.60px;" width="8.00" height="8.00" viewBox="0 0 8 8"><path d="M0.5 0.5 L7.5 7.5 M7.5 0.5 L0.5 7.5" stroke="#222" stroke-width="0.8" stroke-linecap="round"/></svg>
<div class="t" style='left:685.60px;top:280.00px;color:#111;transform:translateX(-50%);'>带密码压缩</div>
<div class="abs" style="left:568.40px;top:318.60px;width:260.00px;height:161.00px;background:#f3f3f3;border:0.8px solid #dedede;border-radius:2px 0 0 2px;"></div>
<div class="t" style='letter-spacing:-0.450px;left:576.00px;top:325.30px;color:#111;'>输入密码<span style='font-family:"Liberation Mono","Noto Sans CJK SC",monospace;font-size:8.3px;font-weight:400;position:relative;top:-0.5px'>(E)</span></div>
<div class="abs" style="left:575.80px;top:339.20px;width:219.40px;height:14.40px;background:#fff;border:0.9px solid #5a9ad8;border-radius:1.5px;"></div>
<div class="t" style='letter-spacing:-0.127px;left:578.00px;top:340.90px;color:#111;'>上老王论坛当老王</div>
<svg style="left:784.96px;top:345.00px;" width="6.08" height="4.00" viewBox="0 0 7.6 5"><path d="M0.8 1 L3.8 4 L6.8 1" fill="none" stroke="#8a8a8a" stroke-width="0.9" stroke-linecap="round" stroke-linejoin="round"/></svg>
<div class="abs" style="left:576.00px;top:396.60px;width:9.60px;height:9.60px;background:#0b64be;border-radius:2px;"></div>
<svg style="left:577.30px;top:398.50px;" width="7.00" height="6.00" viewBox="0 0 7 6"><path d="M1 3 L2.8 4.8 L6 1.2" fill="none" stroke="#fff" stroke-width="1" stroke-linecap="round" stroke-linejoin="round"/></svg>
<div class="t" style='letter-spacing:-0.450px;left:587.40px;top:395.70px;color:#111;'>显示密码<span style='font-family:"Liberation Mono","Noto Sans CJK SC",monospace;font-size:8.3px;font-weight:400;position:relative;top:-0.5px'>(S)</span></div>
<div class="abs" style="left:576.00px;top:411.60px;width:9.60px;height:9.60px;background:#fafafa;border:0.9px solid #8a8a8a;border-radius:2px;"></div>
<div class="t" style='letter-spacing:-0.273px;left:587.40px;top:410.70px;color:#111;'>加密文件名称<span style='font-family:"Liberation Mono","Noto Sans CJK SC",monospace;font-size:8.3px;font-weight:400;position:relative;top:-0.5px'>(N)</span></div>
<div class="abs" style="left:576.80px;top:455.00px;width:216.80px;height:14.00px;background:#fcfcfc;border:0.8px solid #d6d6d6;border-radius:2.5px;"></div>
<div class="t" style='letter-spacing:-0.539px;left:684.00px;top:456.50px;color:#111;transform:translateX(-50%);'>管理密码<span style='font-family:"Liberation Mono","Noto Sans CJK SC",monospace;font-size:8.3px;font-weight:400;position:relative;top:-0.5px'>(O)...</span></div>
<div class="abs" style="left:569.40px;top:488.80px;width:69.40px;height:13.80px;background:#fcfcfc;border:1px solid #2f7fcf;border-radius:2.5px;"></div>
<div class="t" style='left:604.20px;top:490.10px;color:#111;transform:translateX(-50%);'>确定</div>
<div class="abs" style="left:650.60px;top:488.80px;width:69.40px;height:13.80px;background:#fcfcfc;border:0.8px solid #d6d6d6;border-radius:2.5px;"></div>
<div class="t" style='left:685.40px;top:490.10px;color:#111;transform:translateX(-50%);'>取消</div>
<div class="abs" style="left:732.40px;top:488.80px;width:69.40px;height:13.80px;background:#fcfcfc;border:0.8px solid #d6d6d6;border-radius:2.5px;"></div>
<div class="t" style='left:767.00px;top:490.10px;color:#111;transform:translateX(-50%);'>帮助</div>
</div>
</body>
</html>
